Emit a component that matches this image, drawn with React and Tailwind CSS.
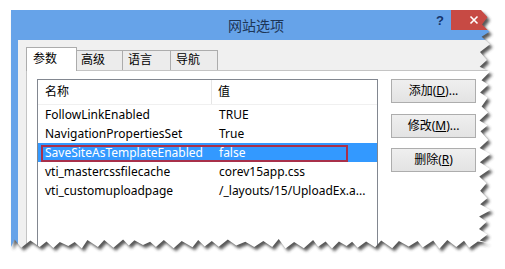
import React from "react";

function makePoly() {
  let s = 12345;
  const r = () => {
    s = (s * 1103515245 + 12345) & 0x7fffffff;
    return s / 0x7fffffff;
  };
  const pts = [[11, 10], [481, 10]];
  let y = 10;
  let i = 0;
  while (y < 243) {
    y = Math.min(y + 4 + r() * 5, 243);
    const x = i % 2 === 0 ? 486 + r() * 5 : 479 + r() * 3;
    pts.push([x, y]);
    i++;
  }
  let x = 486;
  i = 0;
  while (x > 12) {
    x = Math.max(x - (5 + r() * 6), 12);
    const yy = i % 2 === 0 ? 239 + r() * 3 : 245 + r() * 4;
    pts.push([x, yy]);
    i++;
  }
  pts.push([11, 247]);
  return "M" + pts.map((p) => p[0].toFixed(1) + "," + p[1].toFixed(1)).join(" L") + " Z";
}

const POLY = makePoly();

const rows = [
  ["FollowLinkEnabled", "TRUE"],
  ["NavigationPropertiesSet", "True"],
  ["SaveSiteAsTemplateEnabled", "false", true],
  ["vti_mastercssfilecache", "corev15app.css"],
  ["vti_customuploadpage", "/_layouts/15/UploadEx.a..."],
];

function Btn({ children }) {
  return (
    <div className="w-[85px] h-[24px] border border-[#adadad] bg-gradient-to-b from-[#efefef] to-[#e3e3e3] flex items-center justify-center text-[12px] text-black">
      {children}
    </div>
  );
}

export default function App() {
  return (
    <div className="relative w-[505px] h-[269px] bg-white overflow-hidden font-['Noto_Sans','Noto_Sans_CJK_SC',sans-serif] text-[12px] text-black">
      <div className="pt-[10px] pl-[11px]">
        <div className="w-[485px] h-[240px] bg-[#66a3e9] flex flex-col overflow-hidden">
          {/* title bar */}
          <div className="h-[30px] flex shrink-0">
            <div className="flex-1 flex items-center justify-center pl-[72px] text-[14px] text-[#1d3657]">
              网站选项
            </div>
            <div className="w-[22px] h-[22px] flex items-center justify-center font-['Liberation_Sans',sans-serif] font-bold text-[13px] text-[#15346a]">
              ?
            </div>
            <div className="w-[45px] h-[20px] bg-[#c74a44] flex items-center justify-center">
              <svg width="10" height="10" viewBox="0 0 10 10">
                <path d="M1.5 1.5 L8.5 8.5 M8.5 1.5 L1.5 8.5" stroke="white" strokeWidth="1.6" />
              </svg>
            </div>
          </div>
          {/* body */}
          <div className="flex-1 ml-[7px] bg-[#f0f0f0] pt-[7px] pl-[8px] flex flex-col">
            <div className="flex items-end h-[23px] relative z-10">
              <div className="w-[51px] h-[24px] -mb-px bg-white border border-b-0 border-[#acacac] pl-[6px] pt-[3px] leading-[16px]">
                参数
              </div>
              <div className="w-[46px] h-[20px] bg-[#ececec] border border-l-0 border-b-0 border-[#acacac] pl-[4px] pt-[1px] leading-[16px]">
                高级
              </div>
              <div className="w-[48px] h-[20px] bg-[#ececec] border border-l-0 border-b-0 border-[#acacac] pl-[5px] pt-[1px] leading-[16px]">
                语言
              </div>
              <div className="w-[47px] h-[20px] bg-[#ececec] border border-l-0 border-b-0 border-[#acacac] pl-[5px] pt-[1px] leading-[16px]">
                导航
              </div>
            </div>
            <div className="flex-1 bg-white border-l border-t border-[#c4c4c4] pl-[10px] pt-[8px] flex">
              <div className="w-[341px] h-[200px] border border-[#828790] flex flex-col">
                <div className="h-[25px] flex border-b border-[#f0f0f0]">
                  <div className="w-[174px] pl-[7px] flex items-center border-r border-[#e5e5e5]">名称</div>
                  <div className="flex-1 pl-[6px] flex items-center">值</div>
                </div>
                {rows.map(([k, v, sel]) => (
                  <div
                    key={k}
                    className={
                      sel
                        ? "relative h-[19px] flex items-center bg-[#3399ff] text-white"
                        : "relative h-[19px] flex items-center"
                    }
                  >
                    <div className="w-[174px] pl-[7px] whitespace-nowrap">{k}</div>
                    <div className="flex-1 pl-[7px] whitespace-nowrap">{v}</div>
                    {sel && (
                      <div className="absolute left-[3px] top-[2px] w-[307px] h-[17px] border-2 border-[#a8304a]" />
                    )}
                  </div>
                ))}
              </div>
              <div className="ml-[13px] flex flex-col">
                <Btn>
                  添加(<span className="underline">D</span>)...
                </Btn>
                <div className="h-[11px]" />
                <Btn>
                  修改(<span className="underline">M</span>)...
                </Btn>
                <div className="h-[10px]" />
                <Btn>
                  删除(<span className="underline">R</span>)
                </Btn>
              </div>
            </div>
          </div>
        </div>
      </div>
      {/* torn edge effect */}
      <svg className="absolute inset-0" width="505" height="269" viewBox="0 0 505 269">
        <defs>
          <mask id="outside">
            <rect width="505" height="269" fill="white" />
            <path d={POLY} fill="black" />
          </mask>
          <filter id="blur" x="-10%" y="-10%" width="120%" height="120%">
            <feGaussianBlur stdDeviation="1.4" />
          </filter>
        </defs>
        <g mask="url(#outside)">
          <rect width="505" height="269" fill="white" />
          <path d={POLY} transform="translate(2.5,3)" fill="#3a3a3a" opacity="0.85" filter="url(#blur)" />
        </g>
      </svg>
    </div>
  );
}
